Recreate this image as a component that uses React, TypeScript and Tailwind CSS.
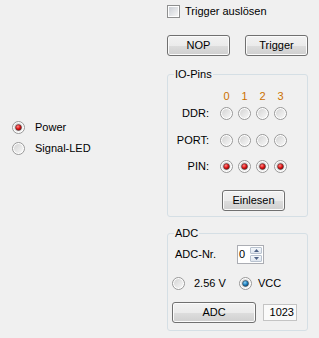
import React from 'react';

// Win7-style radio, drawn as svg so the LED colours can be swapped
const Radio: React.FC<{ checked?: boolean; dot?: 'red' | 'blue' }> = ({ checked = false, dot = 'blue' }) => {
  const id = React.useId().replace(/:/g, '');
  return (
    <svg width="13" height="13" viewBox="0 0 13 13" className="shrink-0 block">
      <defs>
        <linearGradient id={`r${id}`} x1="0" y1="0" x2="1" y2="1">
          <stop offset="0" stopColor="#d4d4d4" />
          <stop offset="1" stopColor="#f7f7f7" />
        </linearGradient>
        <radialGradient id={`d${id}`} cx="0.4" cy="0.35" r="0.7">
          <stop offset="0" stopColor={dot === 'red' ? '#ff8a8a' : '#8fd3f5'} />
          <stop offset="0.55" stopColor={dot === 'red' ? '#e01010' : '#1b7fc0'} />
          <stop offset="1" stopColor={dot === 'red' ? '#7a0000' : '#0a3f6a'} />
        </radialGradient>
      </defs>
      <circle cx="6.5" cy="6.5" r="6" fill="#ffffff" stroke="#979797" strokeWidth="1" />
      <circle cx="6.5" cy="6.5" r="4.5" fill={`url(#r${id})`} />
      {checked && <circle cx="6.5" cy="6.5" r="3" fill={`url(#d${id})`} stroke="#4b4b4b" strokeWidth="0.6" />}
    </svg>
  );
};

const WinButton: React.FC<{ label: string; className?: string }> = ({ label, className = '' }) => (
  <div
    className={`h-[21px] flex items-center justify-center rounded-[3px] border border-[#707070] shadow-[inset_0_0_0_1px_#fbfbfb] bg-[linear-gradient(#f2f2f2_0%,#ebebeb_50%,#dddddd_51%,#cfcfcf_100%)] leading-none ${className}`}
  >
    {label}
  </div>
);

const PinRow: React.FC<{ label: string; checked?: boolean; className?: string }> = ({ label, checked, className = '' }) => (
  <div className={`flex items-center h-[13px] ${className}`}>
    <span className="w-[41px] text-right">{label}</span>
    <div className="ml-[11px] flex gap-[5px]">
      {[0, 1, 2, 3].map(i => (
        <Radio key={i} checked={checked} dot="red" />
      ))}
    </div>
  </div>
);

export default function App() {
  return (
    <div className="flex w-[319px] h-[338px] bg-[#f0f0f0] text-black text-[11px] leading-[13px] font-['Liberation_Sans',Arial,sans-serif] overflow-hidden">
      {/* left: LED choice */}
      <div className="w-[167px] shrink-0 pl-[12px] pt-[121px] flex flex-col gap-[8px]">
        <div className="flex items-center h-[13px] gap-[10px]">
          <Radio checked dot="red" />
          <span>Power</span>
        </div>
        <div className="flex items-center h-[13px] gap-[10px]">
          <Radio />
          <span>Signal-LED</span>
        </div>
      </div>

      {/* right: controls */}
      <div className="w-[141px] shrink-0 flex flex-col">
        <div className="mt-[5px] h-[13px] flex items-center gap-[5px]">
          <div className="w-[13px] h-[13px] border border-[#8e8f8f] bg-white flex items-center justify-center">
            <div className="w-[9px] h-[9px] bg-[linear-gradient(135deg,#cbcfd5,#f6f6f6)]" />
          </div>
          <span>Trigger auslösen</span>
        </div>

        <div className="mt-[17px] flex justify-between">
          <WinButton label="NOP" className="w-[63px]" />
          <WinButton label="Trigger" className="w-[63px]" />
        </div>

        <fieldset className="mt-[12px] border border-[#d5dfe5] rounded-[3px] pt-[9px] pb-[5px]">
          <legend className="ml-[6px] px-[1px]">IO-Pins</legend>
          <div className="flex items-center h-[13px]">
            <span className="w-[41px]" />
            <div className="ml-[11px] flex gap-[5px] text-[#cc7000]">
              {['0', '1', '2', '3'].map(d => (
                <span key={d} className="w-[13px] text-center">{d}</span>
              ))}
            </div>
          </div>
          <PinRow label="DDR:" className="mt-[4px]" />
          <PinRow label="PORT:" className="mt-[14px]" />
          <PinRow label="PIN:" checked className="mt-[13px]" />
          <WinButton label="Einlesen" className="w-[63px] mt-[17px] ml-[54px]" />
        </fieldset>

        <fieldset className="mt-[10px] border border-[#d5dfe5] rounded-[3px] pt-[5px] pb-[7px]">
          <legend className="ml-[6px] px-[1px]">ADC</legend>
          <div className="flex items-center h-[19px] pl-[7px]">
            <span className="w-[62px]">ADC-Nr.</span>
            <div className="w-[27px] h-[19px] border border-[#abadb3] bg-white flex">
              <span className="flex-1 pl-[1px] leading-[17px]">0</span>
              <div className="w-[14px] flex flex-col gap-px p-px">
                <div className="flex-1 flex items-center justify-center rounded-[1px] border border-[#b8c2cf] bg-[linear-gradient(#f4f7fb,#dfe6ee)]">
                  <svg width="5" height="3" viewBox="0 0 5 3"><path d="M0 3 L2.5 0 L5 3 Z" fill="#4d6185" /></svg>
                </div>
                <div className="flex-1 flex items-center justify-center rounded-[1px] border border-[#b8c2cf] bg-[linear-gradient(#f4f7fb,#dfe6ee)]">
                  <svg width="5" height="3" viewBox="0 0 5 3"><path d="M0 0 L5 0 L2.5 3 Z" fill="#4d6185" /></svg>
                </div>
              </div>
            </div>
          </div>
          <div className="mt-[13px] h-[13px] flex items-center pl-[4px]">
            <Radio />
            <span className="ml-[9px] w-[45px]">2.56 V</span>
            <Radio checked />
            <span className="ml-[6px]">VCC</span>
          </div>
          <div className="mt-[12px] flex items-center pl-[4px]">
            <WinButton label="ADC" className="w-[84px]" />
            <div className="ml-[7px] w-[34px] h-[17px] border border-[#c4c4c4] bg-[#fafafa] text-right pr-[2px] leading-[15px]">1023</div>
          </div>
        </fieldset>
      </div>
    </div>
  );
}
